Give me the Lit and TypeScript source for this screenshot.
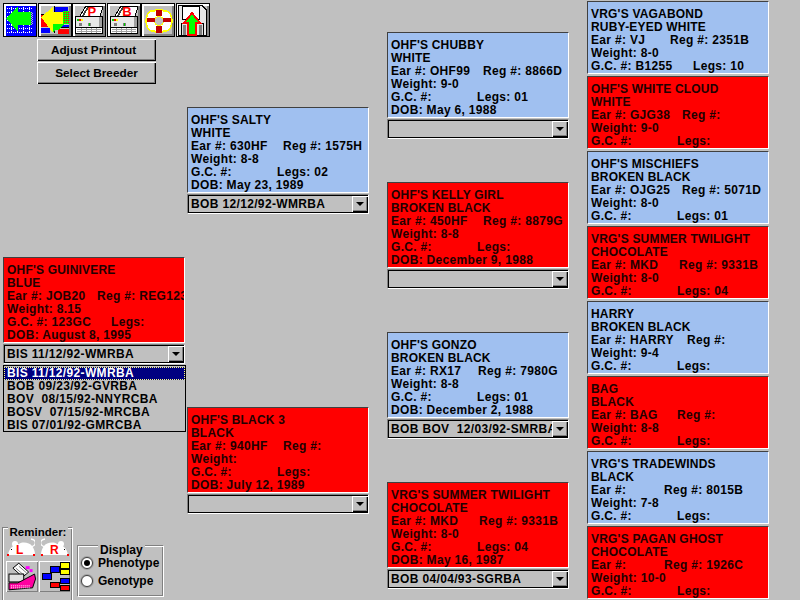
import { LitElement, html, css, svg } from "lit";
import { customElement } from "lit/decorators.js";

type Dog = { c: "b" | "r"; n: string; col: string; ear: string; reg: string; rx: number; w: string; gc: string; legs: string; lx: number; dob?: string; sel?: string };

const G = 86;
const leaf: Dog[] = [
  { c: "b", n: "VRG'S VAGABOND", col: "RUBY-EYED WHITE", ear: "VJ", reg: "2351B", rx: 79, w: "8-0", gc: "B1255", legs: "10", lx: 102 },
  { c: "r", n: "OHF'S WHITE CLOUD", col: "WHITE", ear: "GJG38", reg: "", rx: 91, w: "9-0", gc: "", legs: "", lx: G },
  { c: "b", n: "OHF'S MISCHIEFS", col: "BROKEN BLACK", ear: "OJG25", reg: "5071D", rx: 91, w: "8-0", gc: "", legs: "01", lx: G },
  { c: "r", n: "VRG'S SUMMER TWILIGHT", col: "CHOCOLATE", ear: "MKD", reg: "9331B", rx: 88, w: "8-0", gc: "", legs: "04", lx: G },
  { c: "b", n: "HARRY", col: "BROKEN BLACK", ear: "HARRY", reg: "", rx: 96, w: "9-4", gc: "", legs: "", lx: G },
  { c: "r", n: "BAG", col: "BLACK", ear: "BAG", reg: "", rx: 86, w: "8-8", gc: "", legs: "", lx: G },
  { c: "b", n: "VRG'S TRADEWINDS", col: "BLACK", ear: "", reg: "8015B", rx: 73, w: "7-8", gc: "", legs: "", lx: G },
  { c: "r", n: "VRG'S PAGAN GHOST", col: "CHOCOLATE", ear: "", reg: "1926C", rx: 73, w: "10-0", gc: "", legs: "", lx: G },
];
const grand: Dog[] = [
  { c: "b", n: "OHF'S CHUBBY", col: "WHITE", ear: "OHF99", reg: "8866D", rx: 92, w: "9-0", gc: "", legs: "01", lx: G, dob: "May 6, 1988", sel: "" },
  { c: "r", n: "OHF'S KELLY GIRL", col: "BROKEN BLACK", ear: "450HF", reg: "8879G", rx: 92, w: "8-8", gc: "", legs: "", lx: G, dob: "December 9, 1988", sel: "" },
  { c: "b", n: "OHF'S GONZO", col: "BROKEN BLACK", ear: "RX17", reg: "7980G", rx: 87, w: "8-8", gc: "", legs: "01", lx: G, dob: "December 2, 1988", sel: "BOB BOV  12/03/92-SMRBA" },
  { c: "r", n: "VRG'S SUMMER TWILIGHT", col: "CHOCOLATE", ear: "MKD", reg: "9331B", rx: 88, w: "8-0", gc: "", legs: "04", lx: G, dob: "May 16, 1987", sel: "BOB 04/04/93-SGRBA" },
];
const parents: Dog[] = [
  { c: "b", n: "OHF'S SALTY", col: "WHITE", ear: "630HF", reg: "1575H", rx: 92, w: "8-8", gc: "", legs: "02", lx: G, dob: "May 23, 1989", sel: "BOB 12/12/92-WMRBA" },
  { c: "r", n: "OHF'S BLACK 3", col: "BLACK", ear: "940HF", reg: "", rx: 92, w: "", gc: "", legs: "", lx: G, dob: "July 12, 1989", sel: "" },
];
const self: Dog = { c: "r", n: "OHF'S GUINIVERE", col: "BLUE", ear: "JOB20", reg: "REG123", rx: 90, w: "8.15", gc: "123GC", legs: "", lx: 104, dob: "August 8, 1995", sel: "BIS 11/12/92-WMRBA" };
const awards = ["BIS 11/12/92-WMRBA", "BOB 09/23/92-GVRBA", "BOV  08/15/92-NNYRCBA", "BOSV  07/15/92-MRCBA", "BIS 07/01/92-GMRCBA"];

const printer = (letter: string) => svg`
  <polygon points="8,13 14,3 31,3 28,14" fill="#fff" stroke="#000"/>
  <polygon points="10,13 15,4 17,4 12,13" fill="#404040"/>
  <text x="20" y="13" font-family="Liberation Sans" font-weight="700" font-size="13" fill="#f00" text-anchor="middle">${letter}</text>
  <rect x="3.5" y="13.5" width="27" height="16.5" fill="#e8e8e8" stroke="#000"/>
  <rect x="27" y="14" width="3" height="10" fill="#a0a0a0"/>
  <rect x="4" y="25" width="26" height="5" fill="#fff"/>
  <path d="M5 26.5h24M5 28.5h24M9 25v5M14 25v5M19 25v5M24 25v5" stroke="#a0a0a0" stroke-width="1"/>
  <rect x="4" y="24" width="26" height="1" fill="#000"/>
  <rect x="5" y="16" width="2" height="2" fill="#0c0"/><rect x="7" y="16" width="2" height="2" fill="#f00"/><rect x="9" y="16" width="2" height="2" fill="#ff0"/>
  <rect x="7" y="20" width="3" height="3" fill="#808080"/><rect x="16" y="20" width="3" height="3" fill="#808080"/><rect x="17" y="20" width="1" height="3" fill="#0c0"/>`;

const icons = [
  svg`<rect x="3" y="3" width="30" height="30" fill="#00f"/>
    <path d="M4 5h26M4 9h26M4 13h26M4 17h26M4 21h26M4 25h26M4 29h26" stroke="#fff" stroke-dasharray="1 1"/>
    <path d="M8 4v26M14 4v26M20 4v26M26 4v26" stroke="#fff" stroke-dasharray="1 1"/>
    <polygon points="3,15 15,3 15,9 28,9 28,22 15,22 15,29" fill="#0f0"/>
    <path d="M28.5 9v13M29.5 10v11" stroke="#c0c0c0" stroke-dasharray="1 1"/>`,
  svg`<rect x="3" y="3" width="28" height="28" fill="#c0c0c0"/>
    <rect x="3" y="12" width="8" height="12" fill="#f00"/><rect x="17" y="4" width="13" height="6" fill="#00f"/>
    <rect x="3" y="25" width="9" height="5" fill="#00f"/><rect x="20" y="26" width="11" height="5" fill="#f00"/>
    <rect x="20" y="22" width="11" height="3" fill="#00f"/>
    <path d="M16.5 3v27M3 11.5h12M17 24.5h14" stroke="#000"/>
    <rect x="25" y="8" width="6" height="13" fill="#0f0"/>
    <path d="M26.5 9v11M28.5 9v11M30.5 9v11" stroke="#f00" stroke-dasharray="1 1"/>
    <polygon points="14,21 26,21 20,27 17,27 15,30" fill="#0f0"/>
    <polygon points="3,14 15,4 15,9 25,9 25,21 15,21 15,30" fill="#ff0"/>`,
  printer("P"),
  printer("B"),
  svg`<ellipse cx="11" cy="18" rx="6" ry="10" fill="#fff" stroke="#ff0" stroke-width="1.5"/>
    <ellipse cx="25" cy="18" rx="6" ry="10" fill="#fff" stroke="#ff0" stroke-width="1.5"/>
    <ellipse cx="18" cy="18" rx="10" ry="10.5" fill="#fff"/>
    <circle cx="18" cy="18" r="4.5" fill="#c0c0c0" stroke="#ff0"/>
    <path d="M11 8.5C13 6.5 23 6.5 25 8.5M11 27.5C13 29.5 23 29.5 25 27.5" fill="none" stroke="#ff0" stroke-width="1.5"/>
    <rect x="15" y="7" width="6" height="6" fill="#c00000"/><rect x="15" y="23" width="6" height="7" fill="#c00000"/>
    <rect x="6" y="15" width="8" height="4" fill="#c00000"/><rect x="22" y="15" width="8" height="4" fill="#c00000"/>`,
  svg`<polygon points="2.5,2.5 26,2.5 30.5,7 30.5,32.5 2.5,32.5" fill="#e8e8e8" stroke="#000"/>
    <rect x="6.5" y="3" width="17" height="13" fill="#fff" stroke="#000" stroke-width="1"/>
    <rect x="5.5" y="20.5" width="22" height="12" fill="#e0e0e0" stroke="#000" stroke-width="1"/>
    <rect x="23" y="22" width="3" height="10" fill="#808080"/><rect x="7" y="22" width="3" height="10" fill="#808080"/>
    <polygon points="16,10 8,20 12,20 12,32 20,32 20,20 24,20" fill="#0f0" stroke="#f00" stroke-width="2"/>`,
];

const rat = svg`<path d="M1 17 C2 10 7 6 12 6 C16 3 23 5 25 8 C27 11 28 13 28 17 Z" fill="#fff"/>
  <path d="M23 9 C30 8 30 2 24 1" fill="none" stroke="#fff" stroke-width="1.4"/>
  <circle cx="8" cy="6" r="3" fill="#fff"/>
  <rect x="4" y="11" width="1" height="1" fill="#000"/>
  <rect x="0" y="16" width="2" height="2" fill="#f00"/><rect x="26" y="16" width="2" height="2" fill="#f00"/>`;

@customElement("pedigree-card")
class PedigreeCard extends LitElement {
  static properties = { dog: { attribute: false } };
  dog!: Dog;
  static styles = css`
    :host { display: block; }
    .card {
      box-sizing: border-box; width: 182px; padding: 6px 0 0 3px; overflow: hidden;
      border: 1px solid #fff; border-top-color: #404040; border-left-color: #404040;
      font: 700 12px/13px "Liberation Sans", sans-serif; letter-spacing: 0.32px; color: #000;
    }
    .b { background: #a0c0f0; }
    .r { background: #f00; color: #200; }
    .leaf { height: 73px; }
    .full { height: 86px; }
    .name { letter-spacing: 0.2px; }
    .row { display: flex; height: 13px; white-space: pre; }
    .row span:first-child { flex: none; }
  `;
  render() {
    const d = this.dog;
    return html`<div class="card ${d.c} ${d.dob ? "full" : "leaf"}">
      <div class="row name">${d.n}</div>
      <div class="row name">${d.col}</div>
      <div class="row"><span style="width:${d.rx}px">Ear #: ${d.ear}</span><span>Reg #: ${d.reg}</span></div>
      <div class="row">Weight: ${d.w}</div>
      <div class="row"><span style="width:${d.lx}px">G.C. #: ${d.gc}</span><span>Legs: ${d.legs}</span></div>
      ${d.dob ? html`<div class="row">DOB: ${d.dob}</div>` : ""}
    </div>`;
  }
}

@customElement("award-select")
class AwardSelect extends LitElement {
  static properties = { value: {} };
  value = "";
  static styles = css`
    :host { display: block; margin-top: 1px; }
    .sel {
      box-sizing: border-box; width: 182px; height: 20px; display: flex; align-items: center;
      background: #c0c0c0; border: 1px solid #fff; border-top-color: #808080; border-left-color: #808080;
      box-shadow: inset 1px 1px 0 #000, inset -1px -1px 0 #000;
      font: 700 12px/13px "Liberation Sans", sans-serif; letter-spacing: 0.35px; color: #000;
    }
    .txt { flex: 1; min-width: 0; overflow: hidden; white-space: pre; padding-left: 3px; }
    .btn {
      flex: none; width: 16px; height: 16px; display: flex; align-items: center; justify-content: center;
      box-shadow: inset 1px 1px 0 #fff, inset -1px -1px 0 #000, inset -2px -2px 0 #808080;
    }
    .arrow { width: 0; height: 0; border: 4px solid transparent; border-top: 4px solid #000; border-bottom: 0; }
  `;
  render() {
    return html`<div class="sel"><div class="txt">${this.value}</div><div class="btn"><div class="arrow"></div></div></div>`;
  }
}

@customElement("app-root")
class AppRoot extends LitElement {
  static styles = css`
    :host { display: block; width: 800px; height: 600px; overflow: hidden; background: #c0c0c0; }
    .page {
      display: grid; grid-template-columns: 184px 200px 200px 182px; padding-left: 3px; height: 600px;
      font: 700 12px/13px "Liberation Sans", sans-serif; letter-spacing: 0.35px; color: #000;
    }
    .c1 { display: flex; flex-direction: column; padding-top: 3px; min-width: 0; }
    .c2 { display: flex; flex-direction: column; padding-top: 107px; gap: 193px; }
    .c3 { display: flex; flex-direction: column; padding-top: 32px; gap: 43px; }
    .c4 { display: flex; flex-direction: column; padding-top: 1px; gap: 2px; }
    .tools { display: flex; gap: 0.6px; width: 210px; }
    .tool {
      width: 34px; height: 34px; flex: none; background: #c0c0c0;
      box-shadow: inset 0 0 0 1px #000, inset 2px 2px 0 1px #fff, inset -2px -2px 0 1px #808080;
    }
    .tool svg { display: block; width: 34px; height: 34px; }
    .cmds { display: flex; flex-direction: column; gap: 1px; margin: 2px 0 0 34px; width: 119px; letter-spacing: 0; font-size: 11.8px; }
    .cmd {
      height: 22px; display: flex; align-items: center; justify-content: center; background: #c0c0c0;
      box-shadow: inset 1px 1px 0 #fff, inset -1px -1px 0 #000, inset -2px -2px 0 #808080;
    }
    .cmd.first { padding-right: 6px; box-sizing: border-box; }
    .subject { margin-top: 173px; }
    .list { box-sizing: border-box; width: 183px; height: 67px; margin-top: 1px; border: 1px solid #000; padding: 1px 0; background: #c0c0c0; }
    .opt { height: 13px; padding-left: 3px; white-space: pre; line-height: 13px; }
    .opt.on { background: #000080; color: #fff; outline: 1px dotted #ffff80; outline-offset: -1px; }
    .bottom { display: flex; gap: 5px; margin-top: 96px; align-items: flex-start; }
    .group { box-sizing: border-box; border: 1px solid #fff; box-shadow: -1px -1px 0 #808080, inset -1px -1px 0 #808080; }
    .title { background: #c0c0c0; width: fit-content; letter-spacing: 0; line-height: 12px; margin-top: -3px; padding: 0 2px; }
    .rem { width: 70px; height: 80px; padding: 0 2px; }
    .rem .title { margin-left: auto; margin-right: auto; font-size: 11.5px; }
    .rats { display: flex; justify-content: space-between; padding: 0 1px 0 1px; }
    .rats div { position: relative; width: 28px; height: 19px; }
    .rats svg { display: block; width: 28px; height: 19px; }
    .mirror svg { transform: scaleX(-1); }
    .letter { position: absolute; left: 9px; top: 6px; color: #f00; font-size: 12px; line-height: 12px; }
    .rem-btns { display: flex; gap: 1px; margin-top: 4px; }
    .rbtn { width: 31.5px; height: 31px; background: #c0c0c0; box-shadow: inset 1px 1px 0 #fff, inset -1px -1px 0 #808080; }
    .rbtn svg { display: block; width: 100%; height: 31px; }
    .disp { width: 86px; height: 51px; margin-top: 18px; padding: 0 0 0 2px; letter-spacing: 0; }
    .disp .title { margin-left: 17px; }
    .radios { margin-top: -2px; }
    .radio { display: flex; align-items: center; gap: 5px; height: 18px; }
    .dot { box-sizing: border-box; width: 12px; height: 12px; border-radius: 50%; background: #fff; border: 1px solid #404040; box-shadow: 0 0 0 1px #a0a0a0; display: flex; align-items: center; justify-content: center; }
    .dot.on::after { content: ""; width: 6px; height: 6px; border-radius: 50%; background: #000; }
  `;
  render() {
    return html`<div class="page">
      <div class="c1">
        <div class="tools">${icons.map((i) => html`<div class="tool"><svg viewBox="0 0 34 34" shape-rendering="crispEdges">${i}</svg></div>`)}</div>
        <div class="cmds"><div class="cmd first">Adjust Printout</div><div class="cmd">Select Breeder</div></div>
        <div class="subject">
          <pedigree-card .dog=${self}></pedigree-card>
          <award-select .value=${self.sel}></award-select>
          <div class="list">${awards.map((a, i) => html`<div class="opt ${i === 0 ? "on" : ""}">${a}</div>`)}</div>
        </div>
        <div class="bottom">
          <div class="group rem">
            <div class="title">Reminder:</div>
            <div class="rats">
              <div><svg viewBox="0 0 28 19">${rat}</svg><span class="letter">L</span></div>
              <div class="mirror"><svg viewBox="0 0 28 19">${rat}</svg><span class="letter">R</span></div>
            </div>
            <div class="rem-btns">
              <div class="rbtn"><svg viewBox="0 0 32 31">
                <polygon points="7,7 13,2 23,11 17,16" fill="#fff" stroke="#000"/>
                <path d="M10 7l8 7M13 5l8 7" stroke="#808080"/>
                <rect x="3" y="13" width="15" height="8" fill="#e0e0e0" stroke="#000"/>
                <rect x="20" y="5" width="4" height="3" fill="#f0f"/><rect x="24" y="8" width="3" height="3" fill="#f0f"/>
                <polygon points="3,22 12,22 29,13 30,18 27,27 3,29" fill="#ff00a0" stroke="#000"/>
                <path d="M5 25h20M5 27h20" stroke="#fff" stroke-dasharray="1 1"/>
              </svg></div>
              <div class="rbtn"><svg viewBox="0 0 32 31" shape-rendering="crispEdges">
                <g stroke="#000">
                  <rect x="21.5" y="1.5" width="9" height="6" fill="#ff0"/><rect x="21.5" y="8.5" width="9" height="5" fill="#ff0"/>
                  <rect x="11.5" y="5.5" width="9" height="6" fill="#00f"/><rect x="3.5" y="12.5" width="9" height="6" fill="#00f"/>
                  <rect x="21.5" y="17.5" width="9" height="5" fill="#00f"/><rect x="11.5" y="21.5" width="9" height="5" fill="#f00"/>
                  <rect x="21.5" y="24.5" width="9" height="5" fill="#f00"/>
                </g>
              </svg></div>
            </div>
          </div>
          <div class="group disp">
            <div class="title">Display</div>
            <div class="radios">
              <div class="radio"><span class="dot on"></span>Phenotype</div>
              <div class="radio"><span class="dot"></span>Genotype</div>
            </div>
          </div>
        </div>
      </div>
      <div class="c2">${parents.map((d) => html`<div><pedigree-card .dog=${d}></pedigree-card><award-select .value=${d.sel}></award-select></div>`)}</div>
      <div class="c3">${grand.map((d) => html`<div><pedigree-card .dog=${d}></pedigree-card><award-select .value=${d.sel}></award-select></div>`)}</div>
      <div class="c4">${leaf.map((d) => html`<pedigree-card .dog=${d}></pedigree-card>`)}</div>
    </div>`;
  }
}
